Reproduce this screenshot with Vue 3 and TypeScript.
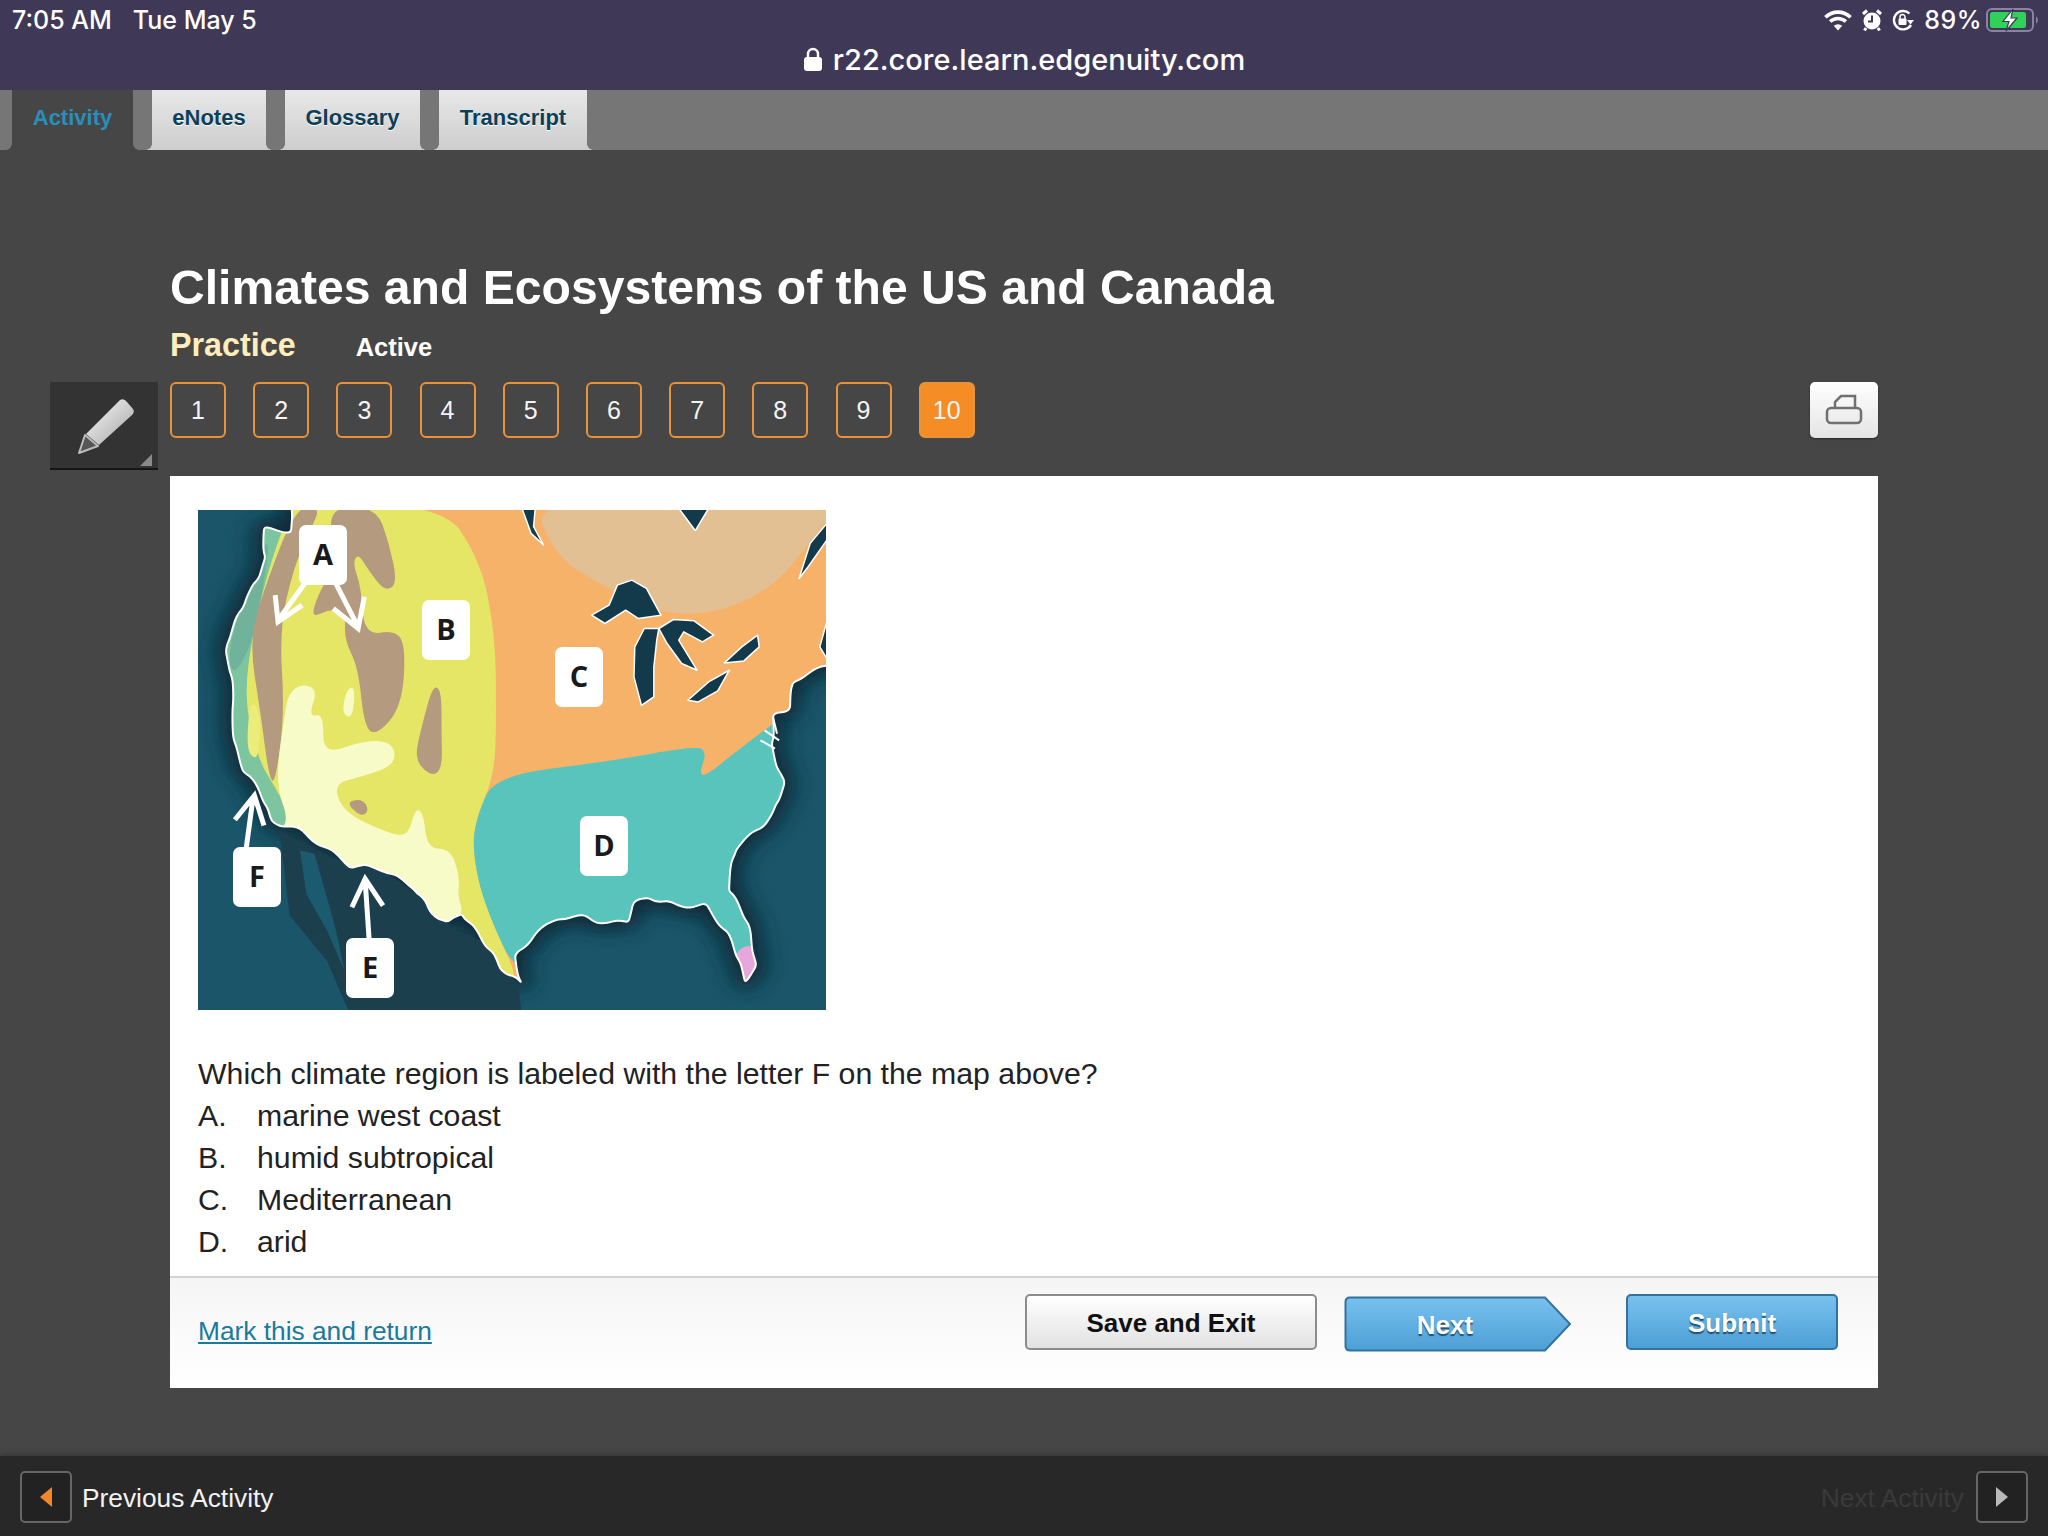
<script setup lang="ts">
const tabs = ['Activity', 'eNotes', 'Glossary', 'Transcript']
const pages = [1, 2, 3, 4, 5, 6, 7, 8, 9, 10]
const options = [
  { key: 'A.', text: 'marine west coast' },
  { key: 'B.', text: 'humid subtropical' },
  { key: 'C.', text: 'Mediterranean' },
  { key: 'D.', text: 'arid' },
]
const mapLabels = [
  { t: 'A', x: 125, y: 45 },
  { t: 'B', x: 248, y: 120 },
  { t: 'C', x: 381, y: 167 },
  { t: 'D', x: 406, y: 336 },
  { t: 'E', x: 172, y: 458 },
  { t: 'F', x: 59, y: 367 },
]

type Pt = [number, number]

function parse(s: string): Pt[] {
  const n = s.trim().split(/\s+/).map(Number)
  const out: Pt[] = []
  for (let i = 0; i < n.length; i += 2) out.push([n[i], n[i + 1]])
  return out
}

// closed curve through the midpoints, so the map shapes look soft like the photo
function smooth(p: Pt[]): string {
  const mid = (a: Pt, b: Pt): Pt => [(a[0] + b[0]) / 2, (a[1] + b[1]) / 2]
  const start = mid(p[p.length - 1], p[0])
  let d = `M${start[0]} ${start[1]}`
  p.forEach((pt, i) => {
    const m = mid(pt, p[(i + 1) % p.length])
    d += ` Q${pt[0]} ${pt[1]} ${m[0]} ${m[1]}`
  })
  return d + ' Z'
}

// coastline wiggle
function rough(p: Pt[]): Pt[] {
  const out: Pt[] = []
  let k = 0
  p.forEach((a, i) => {
    const b = p[(i + 1) % p.length]
    const steps = Math.max(1, Math.round(Math.hypot(b[0] - a[0], b[1] - a[1]) / 16))
    for (let s = 0; s < steps; s++) {
      k++
      const t = s / steps
      out.push([a[0] + (b[0] - a[0]) * t + Math.sin(k * 12.9) * 7, a[1] + (b[1] - a[1]) * t + Math.sin(k * 7.3) * 7])
    }
  })
  return out
}

const coast = parse(
  '240 0 238 92 182 88 185 180 130 290 90 460 100 620 125 810 160 870 200 960 270 990 340 1060 380 1095 470 1105 540 1160 570 1230 620 1270 660 1235 700 1300 740 1400 800 1450 790 1370 830 1300 880 1250 950 1250 1020 1270 1060 1260 1065 1210 1100 1190 1170 1215 1250 1215 1290 1290 1310 1360 1340 1440 1372 1400 1350 1300 1300 1170 1320 1040 1400 940 1440 850 1400 740 1400 650 1450 620 1460 540 1560 480 1560 0'
)
const land = smooth(rough(coast))

const shape = (s: string) => smooth(parse(s))
const poly = (s: string) => 'M' + parse(s).map((p) => p.join(' ')).join(' L') + ' Z'

const regions = [
  { fill: '#e3bf94', d: shape('820 -20 880 170 1000 260 1120 335 1250 345 1400 270 1500 120 1580 -20') },
  { fill: '#e6e666', d: shape('600 0 700 180 735 400 738 620 735 820 690 950 680 1050 710 1220 810 1480 700 1540 0 1500 0 0') },
  { fill: '#58c4bc', d: shape('735 825 1000 785 1225 735 1245 760 1228 815 1240 830 1320 750 1470 610 1600 700 1600 1500 810 1480 710 1220 680 1050 690 950') },
  { fill: '#e6a8dc', d: shape('1305 1365 1352 1322 1400 1400 1340 1480') },
  { fill: '#7cc59f', d: shape('250 0 195 180 150 400 130 600 165 780 205 860 250 965 200 1010 0 900 0 0') },
  { fill: '#6fb39a', d: shape('190 100 130 280 90 460 105 530 150 430 185 200') },
  { fill: '#eaed7c', d: shape('145 595 170 640 168 730 160 780 135 750') },
  { fill: '#b49a7e', d: shape('255 20 315 20 290 90 250 200 215 390 228 640 205 850 190 830 170 640 142 420 180 260') },
  { fill: '#b49a7e', d: shape('335 20 448 20 480 130 500 250 470 275 430 210 405 160 392 190 412 260 420 405 495 390 520 440 510 620 450 705 420 680 405 500 372 420 375 340 340 325 290 355 310 280 330 240 345 150') },
  { fill: '#b49a7e', d: shape('585 555 606 570 606 700 608 800 585 830 540 780 558 680') },
  { fill: '#b49a7e', d: shape('375 905 415 895 432 930 412 950') },
  { fill: '#f7fbc8', d: shape('268 550 308 568 285 650 322 640 320 765 420 720 490 725 495 795 410 830 345 850 370 935 470 995 525 1010 542 925 562 935 572 1045 628 1045 650 1130 645 1190 660 1240 610 1300 470 1130 380 1110 200 1000 240 965 205 850 228 640 238 580') },
  { fill: '#f7fbc8', d: shape('378 565 398 560 392 655 365 640') },
]
const lakes = [
  '800 25 832 25 828 80 852 135 822 100',
  '1178 25 1250 25 1218 92',
  '1535 70 1495 130 1468 235 1490 200 1535 120',
  '1535 365 1518 440 1535 475',
  '968 345 1010 315 1030 255 1065 240 1100 265 1135 345 1080 355 1050 330 1000 370',
  '1070 530 1072 440 1095 385 1130 385 1125 420 1118 500 1118 590 1088 615',
  '1130 385 1165 358 1215 362 1262 405 1235 425 1190 395 1178 420 1222 510 1185 490 1150 430',
  '1288 488 1330 440 1368 405 1372 440 1335 482',
  '1200 600 1250 545 1300 510 1272 572 1225 605',
].map(poly)
</script>

<template>
  <div class="page">
    <header class="status">
      <div class="status__top">
        <div class="status__time"><span>7:05 AM</span><span>Tue May 5</span></div>
        <div class="status__icons">
          <svg width="28" height="21" viewBox="0 0 26 20">
            <path d="M1 7 A17 17 0 0 1 25 7" class="wifi" />
            <path d="M5.500 11 A11 11 0 0 1 20.500 11" class="wifi" />
            <path d="M13 19.500 L9 15 A6 6 0 0 1 17 15 Z" fill="#fff" />
          </svg>
          <svg width="20" height="22" viewBox="0 0 20 22">
            <circle cx="10" cy="12" r="8.500" fill="#fff" />
            <path d="M1 5 L5 1.500 M15 1.500 L19 5 M4 19 L2.500 21.500 M16 19 L17.500 21.500" stroke="#fff" stroke-width="3" />
            <path d="M10 6.500 V12.500 H6" stroke="#3f3857" stroke-width="2" fill="none" />
          </svg>
          <svg width="22" height="22" viewBox="0 0 22 22">
            <path d="M19 16 A9.200 9.200 0 1 1 17.500 4.500" stroke="#fff" stroke-width="2.400" fill="none" />
            <path d="M15 11 L22 11 L18.500 15.500 Z" fill="#fff" />
            <rect x="6.500" y="9.500" width="8" height="6.500" rx="1" fill="#fff" />
            <path d="M8 10 V8 a2.500 2.500 0 0 1 5 0 V10" stroke="#fff" stroke-width="1.500" fill="none" />
          </svg>
          <span class="status__pct">89%</span>
          <svg class="battery" width="54" height="24" viewBox="0 0 54 24">
            <rect x="1" y="1" width="46" height="22" rx="5" fill="none" stroke="#8b83a6" stroke-width="2" />
            <rect x="4" y="4" width="36" height="16" rx="2.500" fill="#30d158" />
            <path d="M50 8.500 c2.500 .8 2.500 6.200 0 7 Z" fill="#8b83a6" />
            <path d="M27 1 L17 13.500 H23 L20 23 L31 10 H25 Z" fill="#fff" stroke="#3f3857" stroke-width="1.200" />
          </svg>
        </div>
      </div>
      <div class="status__url">
        <svg width="20" height="25" viewBox="0 0 20 25">
          <rect x="1" y="10" width="18" height="14" rx="3" fill="#fff" />
          <path d="M5 11 V7 a5 5 0 0 1 10 0 V11" stroke="#fff" stroke-width="2.400" fill="none" />
        </svg>
        <span>r22.core.learn.edgenuity.com</span>
      </div>
    </header>

    <nav class="tabs">
      <div
        v-for="(tab, i) in tabs"
        :key="tab"
        class="tabs__item"
        :class="[`tabs__item--${tab.toLowerCase()}`, { 'tabs__item--active': i === 0 }]"
      >
        {{ tab }}
      </div>
    </nav>

    <main class="main">
      <h1 class="title">Climates and Ecosystems of the US and Canada</h1>
      <div class="sub">
        <span class="sub__kind">Practice</span>
        <span class="sub__state">Active</span>
      </div>

      <div class="toolbar">
        <div class="pencil">
          <svg width="108" height="86" viewBox="0 0 108 86">
            <defs>
              <linearGradient id="pen" x1="0" y1="0" x2="1" y2="1">
                <stop offset="0" stop-color="#fafafa" />
                <stop offset="1" stop-color="#a4a4a4" />
              </linearGradient>
            </defs>
            <path d="M70 18 Q74 16 77 20 L83 27 Q85 30 82 33 L49 63 L36 52 Z" fill="url(#pen)" />
            <path d="M35 53 L48 64 L29 71 Z" fill="#555" stroke="#bbb" stroke-width="2" stroke-linejoin="round" />
            <path d="M90 84 L102 72 V84 Z" fill="#8a8a8a" />
          </svg>
        </div>
        <div class="pager">
          <div v-for="p in pages" :key="p" class="pager__item" :class="{ 'pager__item--on': p === 10 }">{{ p }}</div>
        </div>
        <div class="printer">
          <svg width="40" height="34" viewBox="0 0 40 34">
            <path d="M11 15 V9 L17 3 H31 V15" fill="none" stroke="#707070" stroke-width="2.500" />
            <rect x="3" y="15" width="34" height="15" rx="4" fill="none" stroke="#707070" stroke-width="2.500" />
          </svg>
        </div>
      </div>

      <section class="card">
        <div class="card__body">
          <svg class="map" width="628" height="500" viewBox="0 0 628 500">
            <defs>
              <filter id="soft"><feGaussianBlur stdDeviation="1.200" /></filter>
              <filter id="halo" x="-20%" y="-20%" width="140%" height="140%"><feGaussianBlur stdDeviation="26" /></filter>
              <clipPath id="landClip"><path :d="land" /></clipPath>
            </defs>
            <rect width="628" height="500" fill="#1a5569" />
            <g transform="translate(-7.880 -10.010) scale(0.4148 0.3338)">
              <path :d="land" fill="#0c2c39" stroke="#0c2c39" stroke-width="50" filter="url(#halo)" />
              <path d="M215 990 L340 1070 L470 1115 L560 1190 L630 1280 L700 1320 L790 1450 L800 1540 L385 1540 L330 1380 L240 1245 Z" fill="#1b3f4d" />
              <path d="M265 1050 L300 1060 L350 1280 L372 1410 L330 1290 L280 1180 Z" fill="#1c5a6f" />
              <g clip-path="url(#landClip)">
                <g filter="url(#soft)">
                  <path :d="land" fill="#f7b26a" />
                  <path v-for="(r, i) in regions" :key="i" :d="r.d" :fill="r.fill" />
                </g>
              </g>
              <path :d="land" class="map__coast" />
              <path v-for="(l, i) in lakes" :key="i" :d="l" class="map__lake" />
              <path d="M1385 690 L1420 720 M1375 720 L1410 745 M1405 650 L1415 700" class="map__coast" />
              <path d="M285 235 L212 360 M205 285 L212 365 L270 315" class="map__arrow" />
              <path d="M345 235 L405 380 M345 325 L405 385 L420 290" class="map__arrow" />
              <path d="M135 1045 L152 890 M108 958 L155 885 L178 975" class="map__arrow" />
              <path d="M432 1325 L422 1140 M390 1220 L422 1135 L465 1215" class="map__arrow" />
            </g>
            <g v-for="m in mapLabels" :key="m.t">
              <rect :x="m.x - 24" :y="m.y - 30" width="48" height="60" rx="7" fill="#fff" />
              <text :x="m.x" :y="m.y + 10" class="map__label" text-anchor="middle">{{ m.t }}</text>
            </g>
          </svg>
          <p class="question">Which climate region is labeled with the letter F on the map above?</p>
          <ol class="answers">
            <li v-for="o in options" :key="o.key" class="answers__row">
              <span class="answers__key">{{ o.key }}</span><span>{{ o.text }}</span>
            </li>
          </ol>
        </div>
        <footer class="card__foot">
          <a class="mark">Mark this and return</a>
          <div class="btn btn--save">Save and Exit</div>
          <div class="btn btn--next">
            <svg class="btn__shape" width="228" height="56" viewBox="0 0 228 56">
              <defs>
                <linearGradient id="blue" x1="0" y1="0" x2="0" y2="1">
                  <stop offset="0" stop-color="#78c1ee" />
                  <stop offset="1" stop-color="#4d9fd6" />
                </linearGradient>
              </defs>
              <path d="M6 1.500 H201 L226 28 L201 54.500 H6 Q1.500 54.500 1.500 50 V6 Q1.500 1.500 6 1.500 Z" fill="url(#blue)" stroke="#33729f" stroke-width="2" />
            </svg>
            <span class="btn__text">Next</span>
          </div>
          <div class="btn btn--submit"><span class="btn__text">Submit</span></div>
        </footer>
      </section>
    </main>

    <footer class="bottom">
      <div class="bottom__btn">
        <svg width="14" height="20" viewBox="0 0 14 20"><path d="M13 0 V20 L1 10 Z" fill="#f0872a" /></svg>
      </div>
      <span class="bottom__prev">Previous Activity</span>
      <span class="bottom__next">Next Activity</span>
      <div class="bottom__btn">
        <svg width="14" height="20" viewBox="0 0 14 20"><path d="M1 0 V20 L13 10 Z" fill="#b9b9b9" /></svg>
      </div>
    </footer>
  </div>
</template>

<style>
body {
  margin: 0;
  background: #464646;
}
</style>

<style scoped>
.page {
  width: 2048px;
  height: 1536px;
  display: flex;
  flex-direction: column;
  overflow: hidden;
  font-family: 'Liberation Sans', Arial, sans-serif;
  background: #464646;
}

.status {
  height: 90px;
  background: #3f3857;
  color: #fff;
  display: flex;
  flex-direction: column;
  flex: none;
}

.status__top {
  height: 40px;
  display: flex;
  justify-content: space-between;
  align-items: center;
  padding: 0 8px 0 12px;
}

.status__time {
  display: flex;
  gap: 21px;
  font: 500 25px Inter, sans-serif;
}

.status__icons {
  display: flex;
  align-items: center;
  gap: 10px;
}

.status__pct {
  font: 500 25px Inter, sans-serif;
  letter-spacing: 0.500px;
}

.battery {
  margin-left: -6px;
}

.wifi {
  fill: none;
  stroke: #fff;
  stroke-width: 3.400;
}

.status__url {
  display: flex;
  justify-content: center;
  align-items: center;
  gap: 10px;
  font: 500 29px Inter, sans-serif;
  height: 38px;
}

.tabs {
  height: 60px;
  flex: none;
  display: flex;
  background: #767676;
  padding-left: 12px;
}

.tabs__item {
  position: relative;
  display: flex;
  align-items: center;
  justify-content: center;
  box-sizing: border-box;
  padding-bottom: 5px;
  font-size: 22px;
  font-weight: 700;
  color: #0c3f58;
  background: linear-gradient(#e8e8e8, #cdcdcd);
  text-shadow: 0 1px 0 #fff;
  margin-right: 19px;
}

.tabs__item::before,
.tabs__item::after {
  content: '';
  position: absolute;
  bottom: 0;
  width: 6px;
  height: 6px;
}

.tabs__item::before {
  left: -6px;
  background: radial-gradient(circle at 0 0, #767676 5.500px, #cdcdcd 6px);
}

.tabs__item::after {
  right: -6px;
  background: radial-gradient(circle at 100% 0, #767676 5.500px, #cdcdcd 6px);
}

.tabs__item--activity {
  width: 121px;
}

.tabs__item--enotes {
  width: 114px;
}

.tabs__item--glossary {
  width: 135px;
}

.tabs__item--transcript {
  width: 148px;
}

.tabs__item--active {
  background: #464646;
  color: #2a8fb8;
  text-shadow: none;
}

.tabs__item--active::before {
  background: radial-gradient(circle at 0 0, #767676 5.500px, #464646 6px);
}

.tabs__item--active::after {
  background: radial-gradient(circle at 100% 0, #767676 5.500px, #464646 6px);
}

.main {
  flex: 1;
  padding-top: 109px;
  min-height: 0;
}

.title {
  margin: 0 0 0 170px;
  font-size: 48.100px;
  line-height: 56px;
  font-weight: 700;
  color: #fff;
}

.sub {
  margin: 10px 0 0 170px;
  height: 40px;
  display: flex;
  align-items: center;
  gap: 60px;
  font-weight: 700;
}

.sub__kind {
  font-size: 32.300px;
  color: #fdeebb;
}

.sub__state {
  font-size: 25.500px;
  color: #fff;
  margin-top: 4px;
}

.toolbar {
  margin: 17px 170px 0 50px;
  height: 94px;
  display: flex;
  align-items: flex-start;
}

.pencil {
  width: 108px;
  height: 88px;
  background: #333;
  border-bottom: 2px solid #151515;
  box-sizing: border-box;
  margin-right: 12px;
}

.pencil svg {
  display: block;
}

.pager {
  display: flex;
  gap: 27.200px;
}

.pager__item {
  box-sizing: border-box;
  width: 56px;
  height: 56px;
  padding-top: 1px;
  border: 2px solid #e8923a;
  border-radius: 6px;
  display: flex;
  align-items: center;
  justify-content: center;
  font-size: 25px;
  color: #f4f4f4;
}

.pager__item--on {
  background: #f58d27;
}

.printer {
  margin-left: auto;
  box-sizing: border-box;
  width: 68px;
  height: 56px;
  border-radius: 5px;
  background: linear-gradient(#fff, #e4e4e4);
  box-shadow: 0 1px 2px rgba(0, 0, 0, 0.5);
  display: flex;
  align-items: center;
  justify-content: center;
}

.card {
  margin: 0 170px;
  height: 912px;
  background: #fff;
  display: flex;
  flex-direction: column;
}

.card__body {
  flex: 1;
  padding: 34px 28px 0;
}

.map {
  display: block;
}

.map__coast {
  fill: none;
  stroke: #fff;
  stroke-width: 2px;
  stroke-linejoin: round;
  vector-effect: non-scaling-stroke;
}

.map__lake {
  fill: #123a4a;
  stroke: #fff;
  stroke-width: 1.500px;
  stroke-linejoin: round;
  vector-effect: non-scaling-stroke;
}

.map__arrow {
  fill: none;
  stroke: #fff;
  stroke-width: 5px;
  vector-effect: non-scaling-stroke;
}

.map__label {
  font: 700 29px 'Open Sans', sans-serif;
  fill: #1a1a1a;
}

.question {
  margin: 43px 0 0;
  font-size: 30.250px;
  line-height: 42px;
  color: #222;
}

.answers {
  margin: 0;
  padding: 0;
  list-style: none;
}

.answers__row {
  display: flex;
  font-size: 30.250px;
  line-height: 42px;
  color: #222;
}

.answers__key {
  width: 59px;
}

.card__foot {
  flex: none;
  height: 112px;
  box-sizing: border-box;
  border-top: 2px solid #d2d2d2;
  background: linear-gradient(#f5f5f5, #fff);
  display: flex;
  align-items: flex-start;
  padding: 16px 40px 0 28px;
}

.mark {
  margin-top: 21px;
  font-size: 26.300px;
  line-height: 32px;
  color: #1a7a9e;
  text-decoration: underline;
}

.btn {
  box-sizing: border-box;
  height: 56px;
  padding-top: 2px;
  border-radius: 5px;
  display: flex;
  align-items: center;
  justify-content: center;
  font-size: 26px;
  font-weight: 700;
}

.btn--save {
  width: 292px;
  margin-left: auto;
  color: #111;
  border: 2px solid #8c8c8c;
  background: linear-gradient(#fff, #e2e2e2);
}

.btn--next {
  position: relative;
  width: 228px;
  margin: 2px 0 0 27px;
  padding-right: 26px;
}

.btn__shape {
  position: absolute;
  left: 0;
  top: 0;
}

.btn__text {
  position: relative;
  color: #fff;
  text-shadow: 0 2px 1px #24506f;
}

.btn--submit {
  width: 212px;
  margin-left: 54px;
  border: 2px solid #33729f;
  background: linear-gradient(#78c1ee, #4d9fd6);
}

.bottom {
  height: 80px;
  flex: none;
  box-sizing: border-box;
  background: #282828;
  display: flex;
  align-items: center;
  padding: 2px 20px 0;
  font-size: 26.300px;
  box-shadow: 0 -2px 6px rgba(0, 0, 0, 0.2);
}

.bottom__btn {
  box-sizing: border-box;
  width: 52px;
  height: 52px;
  border: 2px solid #666;
  border-radius: 5px;
  background: #222;
  display: flex;
  align-items: center;
  justify-content: center;
}

.bottom__prev {
  margin-left: 10px;
  margin-top: 2px;
  color: #f2f2f2;
}

.bottom__next {
  margin-left: auto;
  margin-right: 12px;
  margin-top: 2px;
  color: #3a3a3a;
}
</style>
